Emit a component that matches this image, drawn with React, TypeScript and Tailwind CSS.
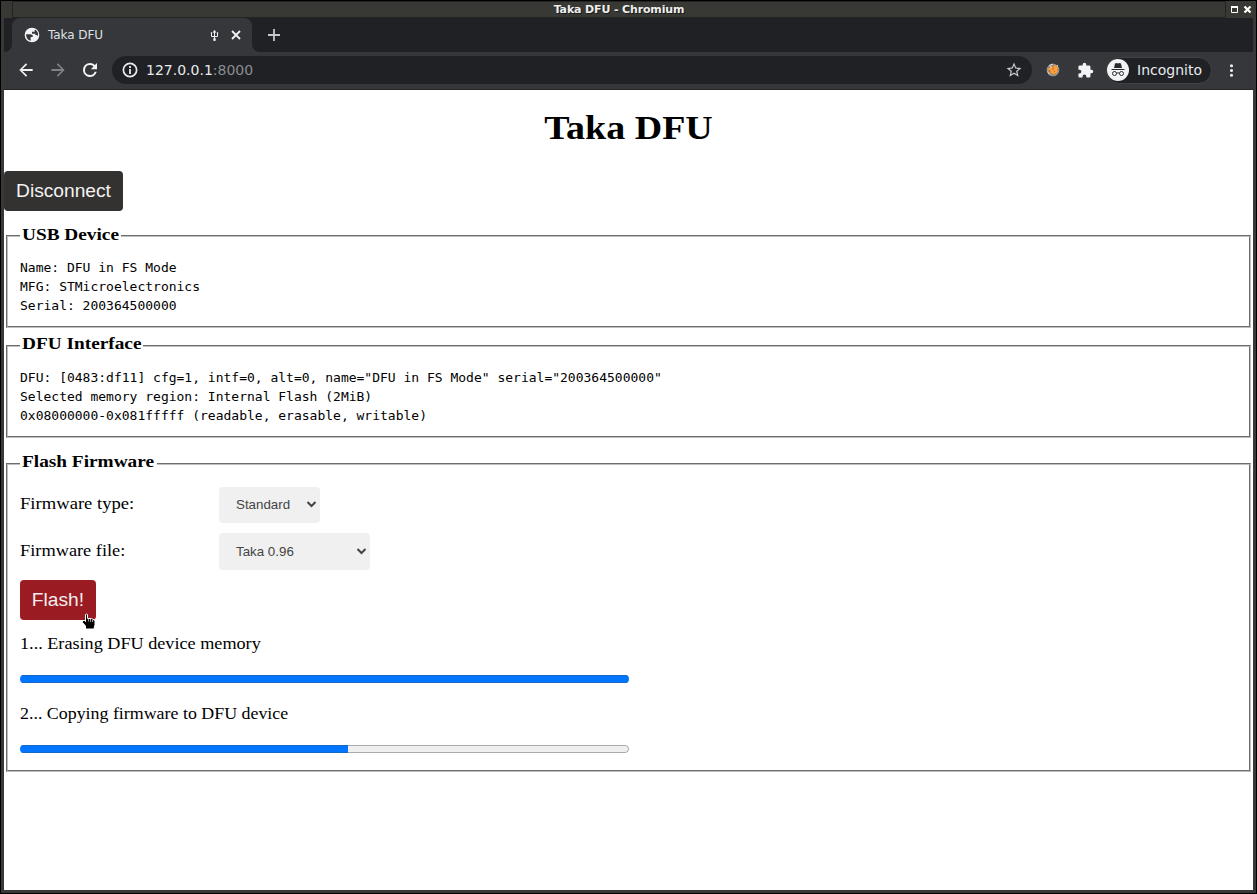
import type { ReactNode } from "react";

const ui = "font-['DejaVu_Sans',sans-serif]";
const serif = "font-['C059','Century_Schoolbook','Liberation_Serif',serif]";

function TitleBar() {
  return (
    <div className="flex h-[17px] items-stretch bg-[#383935]">
      <div className="w-[11px]" />
      <div className={`flex flex-1 items-center justify-center rounded-[1px] border border-[#232421] pt-px text-[11px] leading-none font-bold text-[#eeeeec] ${ui}`}>
        <span className="pb-px tracking-[-0.14px] [text-shadow:1px_1px_0_#1a1a1a]">Taka DFU - Chromium</span>
      </div>
      <svg className="h-[17px] w-[30px]" viewBox="0 0 30 17" fill="none" stroke="#fff">
        <path d="M5.500 5.500h6v6h-6z" strokeWidth="1" />
        <path d="M5 6h7" strokeWidth="2" />
        <path d="M18.500 5.500l6 6m0-6l-6 6" strokeWidth="2.200" />
      </svg>
    </div>
  );
}

function Globe() {
  return (
    <svg className="h-[16px] w-[16px]" viewBox="0 0 24 24" fill="#f1f3f4">
      <path d="M12 1a11 11 0 1 0 0 22 11 11 0 0 0 0-22zM10 20.8A9 9 0 0 1 3.2 11l4.8 0c2 0 3 1 5 1v3h-3v5.8zM20.8 14c-.5-1.700-1.500-2-3.800-2v-2h-5V7h4V4l1.500.600A9 9 0 0 1 20.800 14z" fillRule="evenodd" />
    </svg>
  );
}

function TabStrip() {
  return (
    <div className="flex h-[34px] items-stretch bg-[#202124]">
      <div className="w-2 bg-[#36373a]"><div className="h-full rounded-br-lg bg-[#202124]" /></div>
      <div className={`flex w-[240px] items-center rounded-t-lg bg-[#36373a] pl-[12px] text-[12px] text-[#dfe1e5] ${ui}`}>
        <Globe />
        <span className="ml-[8px] flex-1 tracking-[-0.06px]">Taka DFU</span>
        <svg className="mt-[2px] mr-[12px] h-[14px] w-[9px]" viewBox="0 0 9 14" fill="none" stroke="#f1f3f4">
          <path d="M4.500 2v10M1.500 4v3.500h6V4" />
          <path d="M3 3.500L4.500 1 6 3.500zM3.500 9.500h2v2h-2zM1 3.500h1v1H1zM7 3.500h1v1H7z" fill="#f1f3f4" strokeWidth=".4" />
        </svg>
        <svg className="mr-[11px] h-[10px] w-[10px]" viewBox="0 0 10 10" stroke="#f1f3f4" strokeWidth="1.800"><path d="M1 1l8 8M9 1L1 9" /></svg>
      </div>
      <div className="w-2 bg-[#36373a]"><div className="h-full rounded-bl-lg bg-[#202124]" /></div>
      <svg className="mt-[11px] ml-[8px] h-[12px] w-[12px]" viewBox="0 0 12 12" stroke="#c4c7cb" strokeWidth="1.800"><path d="M6 0v12M0 6h12" /></svg>
    </div>
  );
}

function Material({ d, className }: { d: string; className: string }) {
  return <svg viewBox="0 0 24 24" className={className} fill="currentColor"><path d={d} /></svg>;
}

function Toolbar() {
  return (
    <div className={`flex h-[38px] items-center border-b border-[#252628] bg-[#36373a] pb-px text-[14px] text-[#e8eaed] ${ui}`}>
      <Material className="ml-[12px] h-[20px] w-[20px] text-[#f1f3f4]" d="M20 10.800H7.830l5.590-5.390L12 4l-8 8 8 8 1.410-1.410L7.830 13.200H20v-2.400z" />
      <Material className="ml-[12px] h-[20px] w-[20px] text-[#808286]" d="M12 4l-1.410 1.410L16.170 10.800H4v2.400h12.170l-5.580 5.390L12 20l8-8z" />
      <Material className="ml-[12px] h-[20px] w-[20px] text-[#f1f3f4]" d="M17.900 6.100A8.300 8.300 0 0 0 12 3.600a8.400 8.400 0 1 0 8.100 10.600h-2.500A6 6 0 1 1 12 6c1.660 0 3.140.690 4.220 1.780L13 11h7.400V3.600z" />
      <div className="ml-[12px] flex h-[28px] w-[920px] items-center rounded-full bg-[#202124] pr-[9px] pl-[9px]">
        <Material className="h-[18px] w-[18px]" d="M10.800 6.800h2.400v2.400h-2.400zm0 4h2.400v6.400h-2.400zM12 2a10 10 0 1 0 0 20 10 10 0 0 0 0-20zm0 17.700a7.700 7.700 0 1 1 0-15.400 7.700 7.700 0 0 1 0 15.400z" />
        <span className="ml-[7px] flex-1">127.0.0.1<span className="text-[#8a8d91]">:8000</span></span>
        <Material className="h-[18px] w-[18px] text-[#c8cacd]" d="M22 9.240l-7.190-.620L12 2 9.190 8.630 2 9.240l5.460 4.730L5.820 21 12 17.270 18.180 21l-1.630-7.030L22 9.240zM12 15.400l-3.760 2.270 1-4.280-3.320-2.880 4.380-.380L12 6.100l1.710 4.040 4.380.380-3.320 2.880 1 4.280L12 15.400z" />
      </div>
      <svg className="-mt-px ml-[14px] h-[14px] w-[14px]" viewBox="0 0 14 14">
        <circle cx="7" cy="7" r="5.600" fill="#c98245" stroke="#8e9695" strokeWidth="1.500" />
        <path d="M2 6l3-2 2 1 2-3 3 2-1 3 1 2-4 2-3-1z" fill="#f9a03d" />
        <path d="M6 6h2M3 8h2M8 8.500h1" stroke="#b5692c" />
        <path d="M3 2.500l4-1.500M1.500 8.500l2 3M11 2l1 1M4 4h2" stroke="#d9dddb" fill="none" />
      </svg>
      <Material className="ml-[17px] h-[17px] w-[17px] text-[#f1f3f4]" d="M20.500 11H19V7a2 2 0 0 0-2-2h-4V3.500a2.500 2.500 0 0 0-5 0V5H4a2 2 0 0 0-2 2v3.800h1.500a2.700 2.700 0 0 1 0 5.400H2V20a2 2 0 0 0 2 2h3.800v-1.500a2.700 2.700 0 0 1 5.400 0V22H17a2 2 0 0 0 2-2v-4h1.500a2.500 2.500 0 0 0 0-5z" />
      <div className="ml-[12px] flex h-[27px] w-[106px] shrink-0 items-center rounded-full border border-[#424346] bg-[#202124]">
        <svg className="h-[22px] w-[22px] shrink-0" viewBox="0 0 22 22">
          <circle cx="11" cy="11" r="11" fill="#f1f3f4" />
          <path d="M7 9l1-4.500 1.500-.4 1.500.5 1.500-.5 1.500.4L15 9zM4.500 10h13v1h-13z" fill="#292a2d" />
          <g fill="none" stroke="#292a2d"><circle cx="7.500" cy="14.500" r="2" /><circle cx="14.500" cy="14.500" r="2" /><path d="M9.500 14.300q1.500-1 3 0" /></g>
        </svg>
        <span className="ml-[8px]">Incognito</span>
      </div>
      <Material className="ml-[10px] h-[19px] w-[19px]" d="M12 8a2 2 0 1 0 0-4 2 2 0 0 0 0 4zm0 2a2 2 0 1 0 0 4 2 2 0 0 0 0-4zm0 6a2 2 0 1 0 0 4 2 2 0 0 0 0-4z" />
    </div>
  );
}

function Group({ title, legend, className, children }: { title: string; legend: string; className: string; children: ReactNode }) {
  return (
    <fieldset className={`mx-[2px] border-2 [border-style:groove] border-[#c0c0c0] px-[12px] ${className}`}>
      <legend className={`px-[2px] text-[17px] leading-[19px] font-bold whitespace-nowrap ${legend}`}>
        <span className="block origin-left scale-x-[1.135]">{title}</span>
      </legend>
      {children}
    </fieldset>
  );
}

function Picker({ value, className }: { value: string; className: string }) {
  return (
    <div className={`flex items-center justify-between rounded-[4px] bg-[#f0f0f0] pr-[3px] pl-[17px] font-['Liberation_Sans',sans-serif] text-[13.333px] text-[#444] ${className}`}>
      <span>{value}</span>
      <svg className="h-[7px] w-[11px]" viewBox="0 0 11 7" fill="none" stroke="#444" strokeWidth="2"><path d="M1.500 1l4 4 4-4" /></svg>
    </div>
  );
}

function Bar({ width }: { width: number }) {
  return (
    <div className="flex h-[8px] w-[609px] overflow-hidden rounded-full">
      <div className="h-[8px] border-y border-[#1569c6] bg-[#0075ff]" style={{ width }} />
      {width < 609 && <div className="h-[8px] flex-1 rounded-r-full border border-l-0 border-[#aaa] bg-[#efefef]" />}
    </div>
  );
}

function Page() {
  return (
    <main className={`h-[800px] bg-white text-[17px] leading-[19px] text-black ${serif}`}>
      <h1 className="scale-x-[1.118] pt-[16px] text-center text-[34px] leading-[43px] font-bold">Taka DFU</h1>
      <button className="mt-[22px] block h-[40px] w-[119px] rounded-[4px] bg-[#333230] pb-[2px] font-['Liberation_Sans',sans-serif] text-[19.2px] text-[#f3f3f3]">Disconnect</button>
      <Group title="USB Device" legend="h-[22px] w-[101px]" className="mt-[14px] h-[103px]">
        <pre className="mt-[11px] font-['DejaVu_Sans_Mono',monospace] text-[13px] leading-[19px]">{"Name: DFU in FS Mode\nMFG: STMicroelectronics\nSerial: 200364500000"}</pre>
      </Group>
      <Group title="DFU Interface" legend="h-[24px] w-[123px]" className="mt-[6px] h-[104px]">
        <pre className="mt-[10px] font-['DejaVu_Sans_Mono',monospace] text-[13px] leading-[19px]">{'DFU: [0483:df11] cfg=1, intf=0, alt=0, name="DFU in FS Mode" serial="200364500000"\nSelected memory region: Internal Flash (2MiB)\n0x08000000-0x081fffff (readable, erasable, writable)'}</pre>
      </Group>
      <Group title="Flash Firmware" legend="h-[24px] w-[137px]" className="mt-[14px] h-[320px]">
        <div className="mt-[11px] flex h-[36px] items-center"><span className="w-[199px] origin-left scale-x-[1.095] pb-[4px]">Firmware type:</span><Picker value="Standard" className="h-[36px] w-[101px] pb-px" /></div>
        <div className="mt-[10px] flex h-[37px] items-center"><span className="w-[199px] origin-left scale-x-[1.078] pb-[2px]">Firmware file:</span><Picker value="Taka 0.96" className="h-[37px] w-[151px]" /></div>
        <div className="relative mt-[10px] h-[40px] w-[76px]">
          <button className="block h-[40px] w-[76px] rounded-[4px] bg-[#9b1b23] pb-[2px] font-['Liberation_Sans',sans-serif] text-[19.2px] text-[#f5eeee]">Flash!</button>
          <svg className="absolute top-[33px] left-[61px] h-[17px] w-[16px]" viewBox="0 0 16 17">
            <path d="M4.500 1.500q1-1 2 0v4h4l3.500 2v4l-1 4.500H4.500v-3L1.500 9.500V7.500h2l1 1z" fill="#000" stroke="#fff" />
            <path d="M7.500 5.500v3M9.500 6v3M11.500 7v2" stroke="#ddd" strokeWidth=".7" />
          </svg>
        </div>
        <p className="mt-[14px] origin-left scale-x-[1.069]">1... Erasing DFU device memory</p>
        <div className="mt-[22px]"><Bar width={609} /></div>
        <p className="mt-[21px] origin-left scale-x-[1.052]">2... Copying firmware to DFU device</p>
        <div className="mt-[22px]"><Bar width={328} /></div>
      </Group>
    </main>
  );
}

export default function App() {
  return (
    <div className="h-[894px] w-[1257px] overflow-hidden border border-black bg-[#383838] px-[3px] pb-[3px]">
      <div className="-mx-[3px]"><TitleBar /></div>
      <div className="w-[1249px]">
        <TabStrip />
        <Toolbar />
        <Page />
      </div>
    </div>
  );
}
